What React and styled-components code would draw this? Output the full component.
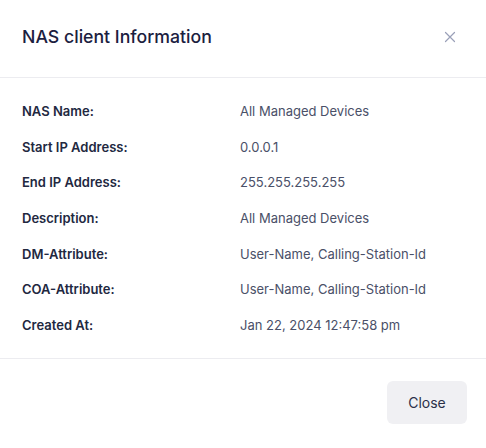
import React from "react";
import styled, { createGlobalStyle } from "styled-components";

const Global = createGlobalStyle`
  html, body { margin: 0; padding: 0; background: #ffffff; }
  body { font-family: Inter, "Noto Sans", sans-serif; -webkit-font-smoothing: antialiased; }
`;

const Modal = styled.div`
  width: 486px;
  height: 448px;
  background: #ffffff;
  display: flex;
  flex-direction: column;
  box-sizing: border-box;
  border-radius: 0 0 6px 6px;
`;

const Header = styled.div`
  height: 78px;
  box-sizing: border-box;
  padding: 0 30px 4px 22px;
  display: flex;
  align-items: center;
  justify-content: space-between;
  border-bottom: 1px solid #ececf0;
`;

const Title = styled.h2`
  margin: 0;
  font-size: 17.7px;
  font-weight: 500;
  color: #1b2040;
  letter-spacing: 0;
`;

const CloseIcon = styled.button`
  border: 0;
  background: none;
  padding: 0;
  width: 12px;
  height: 12px;
  display: flex;
  cursor: pointer;
  color: #9aa0b8;
`;

const Body = styled.div`
  padding: 23px 22px 23px;
  display: flex;
  flex-direction: column;
  gap: 15.7px;
  border-bottom: 1px solid #ececf0;
`;

const Row = styled.div`
  display: grid;
  grid-template-columns: 218px 1fr;
  line-height: 20px;
  font-size: 13px;
`;

const Label = styled.span`
  font-weight: 600;
  color: #22283f;
`;

const Value = styled.span`
  font-weight: 400;
  color: #4a5068;
`;

const Footer = styled.div`
  flex: 1;
  padding: 22px 19px 0 0;
  display: flex;
  justify-content: flex-end;
  align-items: flex-start;
`;

const Button = styled.button`
  width: 80px;
  height: 43px;
  border: 0;
  border-radius: 6px;
  background: #f0f0f3;
  font-family: Inter, "Noto Sans", sans-serif;
  font-size: 14px;
  color: #2b3049;
  cursor: pointer;
`;

const rows = [
  ["NAS Name:", "All Managed Devices"],
  ["Start IP Address:", "0.0.0.1"],
  ["End IP Address:", "255.255.255.255"],
  ["Description:", "All Managed Devices"],
  ["DM-Attribute:", "User-Name, Calling-Station-Id"],
  ["COA-Attribute:", "User-Name, Calling-Station-Id"],
  ["Created At:", "Jan 22, 2024 12:47:58 pm"],
];

export default function App() {
  return (
    <>
      <Global />
      <Modal>
        <Header>
          <Title>NAS client Information</Title>
          <CloseIcon aria-label="close">
            <svg width="12" height="12" viewBox="0 0 12 12" fill="none" stroke="currentColor" strokeWidth="1.2" strokeLinecap="round">
              <path d="M1.5 1.5L10.5 10.5M10.5 1.5L1.5 10.5" />
            </svg>
          </CloseIcon>
        </Header>
        <Body>
          {rows.map(([l, v]) => (
            <Row key={l}>
              <Label>{l}</Label>
              <Value>{v}</Value>
            </Row>
          ))}
        </Body>
        <Footer>
          <Button>Close</Button>
        </Footer>
      </Modal>
    </>
  );
}
